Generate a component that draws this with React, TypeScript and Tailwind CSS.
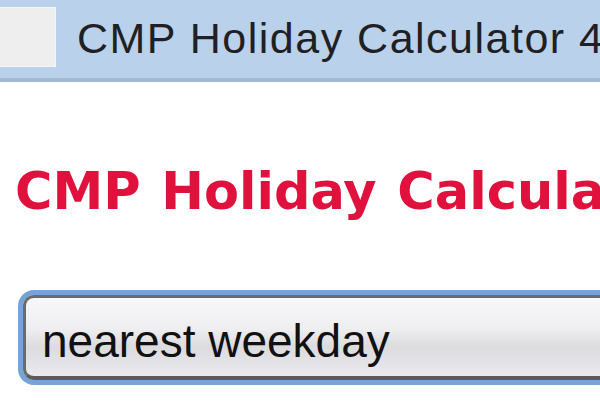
export default function App() {
  return (
    <div className="w-[600px] h-[412px] overflow-hidden bg-white">
      {/* window title bar */}
      <div className="h-[82px] bg-[#b9d1ea] border-b-4 border-[#a3b8d1] flex items-start overflow-hidden">
        <div className="shrink-0 mt-[7px] w-[56px] h-[60px] bg-[#eeeeee] border border-[#f6f6f6] border-l-0" />
        <div
          className="shrink-0 ml-[21px] mt-[17px] whitespace-nowrap text-[43px] leading-none tracking-[1.5px] text-[#1f1f24]"
          style={{ fontFamily: '"Liberation Sans", Arial, sans-serif' }}
        >
          CMP Holiday Calculator 4.0
        </div>
      </div>

      <div className="mt-[84px] ml-[15px] whitespace-nowrap">
        <h1
          className="text-[51px] leading-none font-bold text-[#e0113c] [word-spacing:3px]"
          style={{ fontFamily: '"DejaVu Sans", Verdana, sans-serif' }}
        >
          CMP Holiday Calculator
        </h1>
      </div>

      {/* combo box */}
      <div className="mt-[73px] ml-[18px] w-[640px] h-[95px] rounded-l-[16px] border-[5px] border-r-0 border-[#74a4d8]">
        <div className="h-full rounded-l-[11px] border-[3px] border-b-4 border-r-0 border-[#6b6b6b] border-b-[#5c5c5c] bg-[linear-gradient(to_bottom,#f8f8fa_0%,#eeeef0_40%,#dcdcdf_62%,#e4e4e8_85%,#ececf0_100%)]">
          <div
            className="pl-[16px] pt-[20px] text-[46px] leading-none text-[#111]"
            style={{ fontFamily: '"Liberation Sans", Arial, sans-serif' }}
          >
            nearest weekday
          </div>
        </div>
      </div>
    </div>
  );
}
